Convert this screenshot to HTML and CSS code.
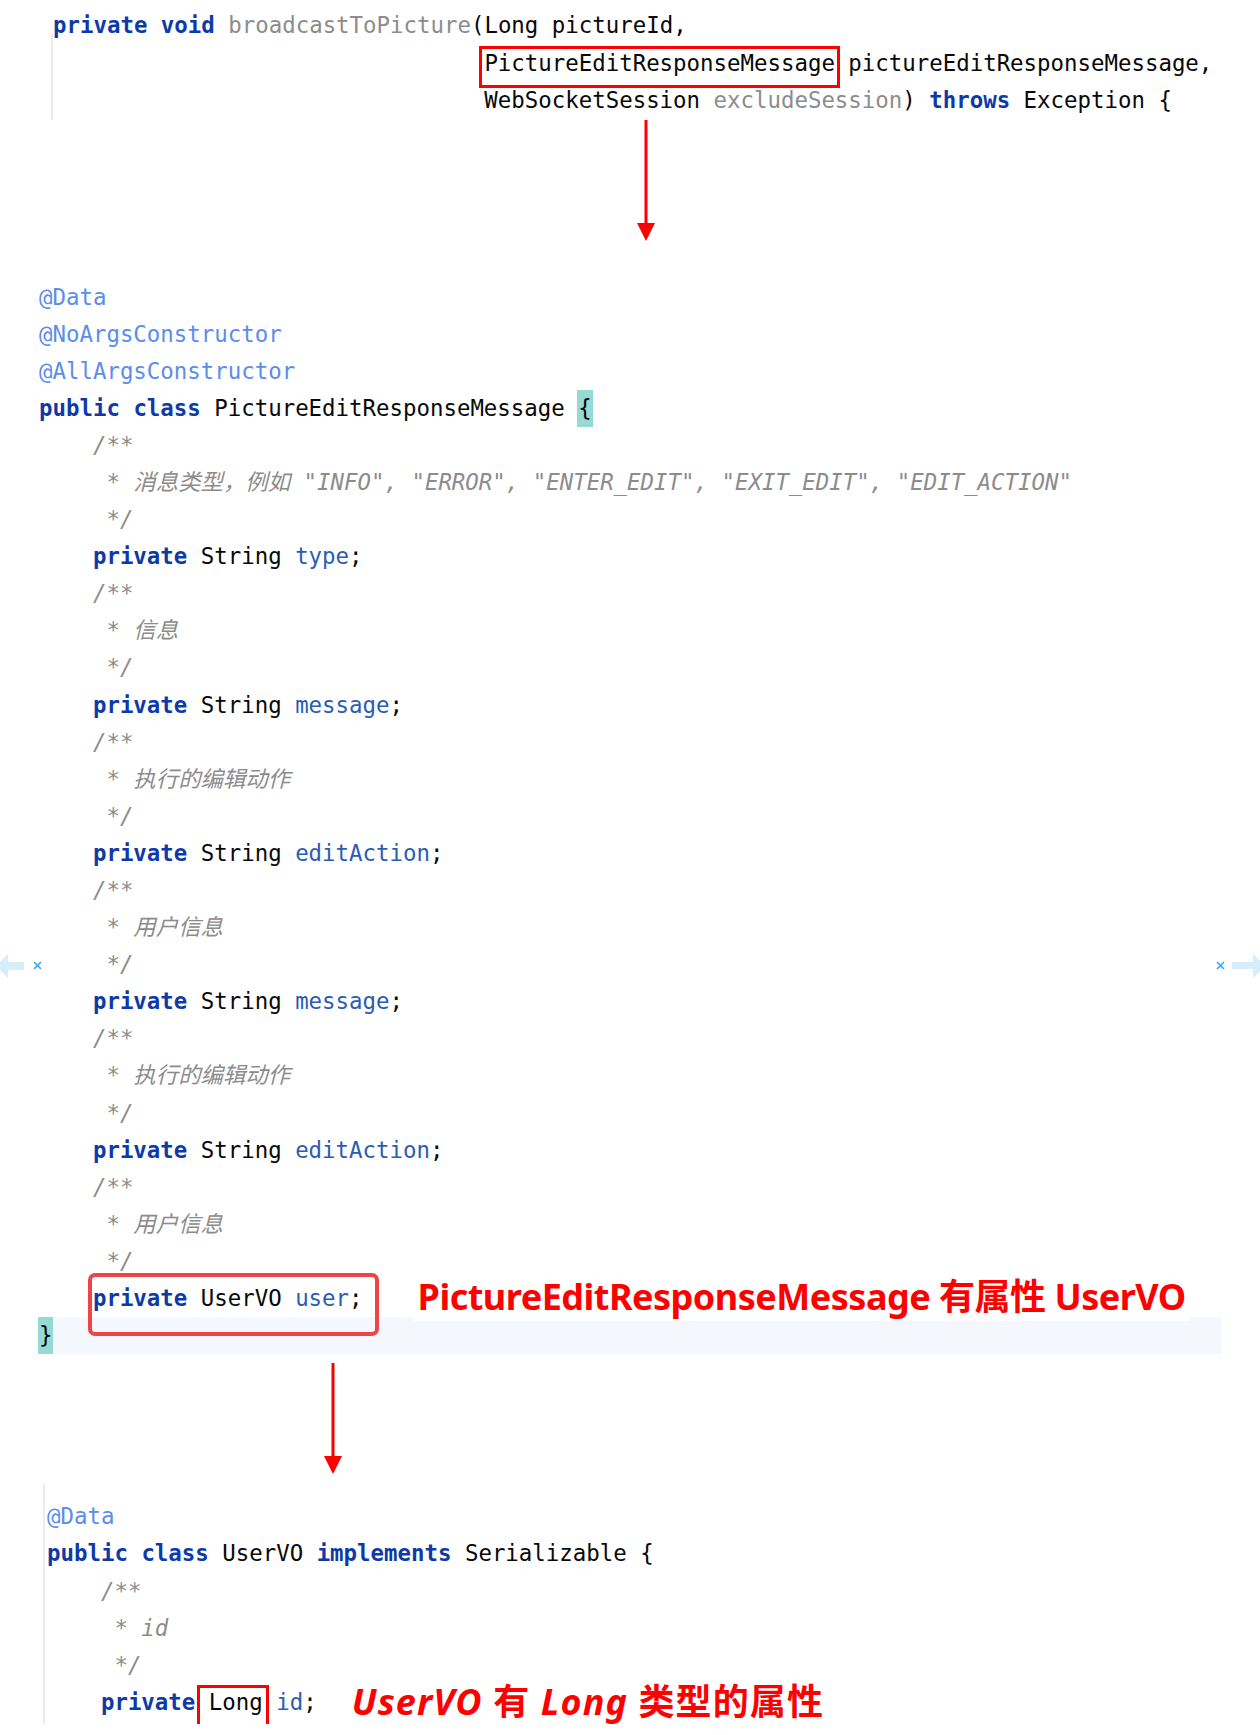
FILE: index.html
```html
<!DOCTYPE html>
<html lang="zh-CN">
<head>
    <meta charset="UTF-8">
    <title>PictureEditResponseMessage</title>
    <link rel="stylesheet" href="styles.css">
</head>
<body>
    <div class="snippet top">
        <div class="ln"><span class="kw">private</span> <span class="kw">void</span> <span class="unused">broadcastToPicture</span>(Long pictureId,</div>
        <div class="cont">
            <div class="ln">                                <span class="box">PictureEditResponseMessage</span> pictureEditResponseMessage,</div>
            <div class="ln">                                WebSocketSession <span class="unused">excludeSession</span>) <span class="kw">throws</span> Exception {</div>
        </div>
    </div>

    <svg class="arrow arrow-1" width="18" height="121" viewBox="0 0 18 121">
        <rect x="7.5" y="0" width="3" height="106" fill="#ff0000"/>
        <polygon points="0,103 18,103 9,121" fill="#ff0000"/>
    </svg>

    <div class="snippet cls">
        <div class="ln"><span class="ann">@Data</span></div>
        <div class="ln"><span class="ann">@NoArgsConstructor</span></div>
        <div class="ln"><span class="ann">@AllArgsConstructor</span></div>
        <div class="ln"><span class="kw">public</span> <span class="kw">class</span> PictureEditResponseMessage <span class="brace">{</span></div>
        <div class="ln cm">    /**</div>
        <div class="ln cm">     * 消息类型，例如 "INFO", "ERROR", "ENTER_EDIT", "EXIT_EDIT", "EDIT_ACTION"</div>
        <div class="ln cm">     */</div>
        <div class="ln">    <span class="kw">private</span> String <span class="fld">type</span>;</div>
        <div class="ln cm">    /**</div>
        <div class="ln cm">     * 信息</div>
        <div class="ln cm">     */</div>
        <div class="ln">    <span class="kw">private</span> String <span class="fld">message</span>;</div>
        <div class="ln cm">    /**</div>
        <div class="ln cm">     * 执行的编辑动作</div>
        <div class="ln cm">     */</div>
        <div class="ln">    <span class="kw">private</span> String <span class="fld">editAction</span>;</div>
        <div class="ln cm">    /**</div>
        <div class="ln cm">     * 用户信息</div>
        <div class="ln cm">     */</div>
        <div class="ln">    <span class="kw">private</span> String <span class="fld">message</span>;</div>
        <div class="ln cm">    /**</div>
        <div class="ln cm">     * 执行的编辑动作</div>
        <div class="ln cm">     */</div>
        <div class="ln">    <span class="kw">private</span> String <span class="fld">editAction</span>;</div>
        <div class="ln cm">    /**</div>
        <div class="ln cm">     * 用户信息</div>
        <div class="ln cm">     */</div>
        <div class="ln">    <span class="round-box"><span class="kw">private</span> UserVO <span class="fld">user</span>;</span><span class="note note-1">PictureEditResponseMessage 有属性 UserVO</span></div>
        <div class="ln current"><span class="brace">}</span></div>
    </div>

    <svg class="arrow arrow-2" width="18" height="111" viewBox="0 0 18 111">
        <rect x="7.5" y="0" width="3" height="96" fill="#ff0000"/>
        <polygon points="0,93 18,93 9,111" fill="#ff0000"/>
    </svg>

    <div class="snippet vo">
        <div class="ln"><span class="ann">@Data</span></div>
        <div class="ln"><span class="kw">public</span> <span class="kw">class</span> UserVO <span class="kw">implements</span> Serializable {</div>
        <div class="ln cm">    /**</div>
        <div class="ln cm">     * id</div>
        <div class="ln cm">     */</div>
        <div class="ln">    <span class="kw">private</span> <span class="box box-long">Long</span> <span class="fld">id</span>;<span class="note note-2"><i>UserVO</i> 有 <i>Long</i> 类型的属性</span></div>
    </div>

    <!-- crop markers at the sides -->
    <svg class="marker marker-left" width="46" height="24" viewBox="0 0 46 24">
        <rect x="6" y="8" width="18" height="8" fill="#d6edfb"/>
        <polygon points="8,0 8,24 -4,12" fill="#d6edfb"/>
        <path d="M34 8 L41 15 M41 8 L34 15" stroke="#35a9f0" stroke-width="1.6"/>
    </svg>
    <svg class="marker marker-right" width="46" height="24" viewBox="0 0 46 24">
        <path d="M3 8 L10 15 M10 8 L3 15" stroke="#35a9f0" stroke-width="1.6"/>
        <rect x="18" y="8" width="22" height="7" fill="#d6edfb"/>
        <polygon points="39,0 39,24 52,12" fill="#d6edfb"/>
    </svg>
</body>
</html>
```

FILE: styles.css
```css
body {
    margin: 0;
    position: relative;
    background: #fff;
    color: #080808;
    font-family: "DejaVu Sans Mono", "Noto Sans CJK SC", monospace;
    font-size: 22.4px;
}

.ln {
    white-space: pre;
}

/* syntax colours */
.kw { color: #0d3aa8; font-weight: bold; }
.unused { color: #8c8c8c; }
.fld { color: #2b5cb4; }
.ann { color: #5a8eea; }
.cm { color: #8c8c8c; font-style: italic; }

.brace {
    display: inline-block;
    background: #96dad6;
    padding: 0 1px;
    margin: 0 -1px;
}

/* top: method signature */
.top {
    padding: 7px 0 0 51px;
    line-height: 37.5px;
}

.top > .ln {
    padding-left: 2px;
}

.cont {
    border-left: 2px solid #ebebeb;
    margin-top: -11px;
    padding-top: 11px;
}

.arrow {
    display: block;
}

.arrow-1 { margin-left: 637px; }
.arrow-2 { margin: 9px 0 0 324px; }

/* middle: PictureEditResponseMessage */
.cls {
    margin: 38px 0 0 39px;
    width: 1182px;
    line-height: 37.1px;
}

.current {
    background: #f4f7fd;
}

/* bottom: UserVO */
.vo {
    margin: 10px 0 0 43px;
    padding: 14px 0 3px 2px;
    border-left: 2px solid #ebebeb;
    line-height: 37.2px;
}

/* hand-drawn marks */
.box {
    border: 3px solid #ff0000;
    padding: 1px 2px 9px;
    margin: 0 -5px;
}

.box-long {
    padding: 1px 3px 11px 9px;
    margin: 0 -6px 0 -12px;
}

.round-box {
    border: 4px solid #ef4444;
    border-radius: 7px;
    padding: 8px 12px 21px 1px;
    margin: 0 -16px 0 -5px;
}

.note {
    color: #ff0000;
    background: #fff;
    font-family: "Comic Sans MS", "Noto Sans", "Noto Sans CJK SC", sans-serif;
    font-weight: bold;
    font-size: 36px;
    line-height: 0;
    font-style: normal;
    padding: 0 4px;
}

.note-1 {
    margin-left: 51px;
    letter-spacing: -0.5px;
    vertical-align: -4px;
}

.note-2 {
    margin-left: 31px;
    letter-spacing: 1.1px;
    vertical-align: -5px;
}

.note i {
    font-style: italic;
}

.marker {
    position: absolute;
    top: 954px;
}

.marker-left { left: 0; }
.marker-right { right: 0; }
```
